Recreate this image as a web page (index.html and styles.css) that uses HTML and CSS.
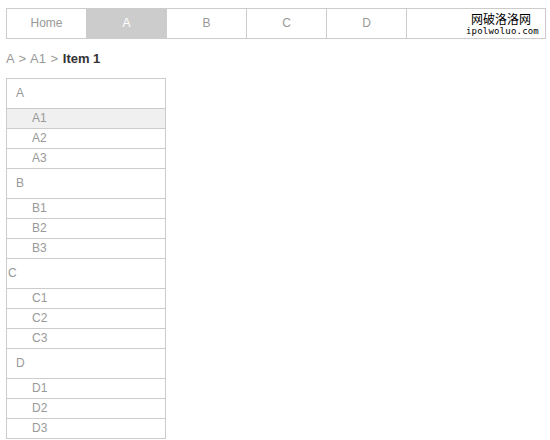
FILE: index.html
```html
<!DOCTYPE html>
<html>
<head>
<meta charset="utf-8">
<link rel="stylesheet" href="styles.css">
</head>
<body>
<ul class="nav">
  <li class="nav-item">Home</li>
  <li class="nav-item active">A</li>
  <li class="nav-item">B</li>
  <li class="nav-item">C</li>
  <li class="nav-item">D</li>
  <li class="nav-logo">
    <span class="logo-cn">网破洛洛网</span>
    <span class="logo-en">ipolwoluo.com</span>
  </li>
</ul>
<div class="crumbs">A &gt; A1 &gt; <b>Item 1</b></div>
<ul class="side">
  <li class="head">A</li>
  <li class="sub current">A1</li>
  <li class="sub">A2</li>
  <li class="sub">A3</li>
  <li class="head">B</li>
  <li class="sub">B1</li>
  <li class="sub">B2</li>
  <li class="sub">B3</li>
  <li class="head flush">C</li>
  <li class="sub">C1</li>
  <li class="sub">C2</li>
  <li class="sub">C3</li>
  <li class="head">D</li>
  <li class="sub">D1</li>
  <li class="sub">D2</li>
  <li class="sub">D3</li>
</ul>
</body>
</html>
```
FILE: styles.css
```css
* { box-sizing: border-box; }
body {
  margin: 0;
  padding: 8px 6px 0;
  font-family: "Liberation Sans", Arial, sans-serif;
  font-size: 12px;
  color: #999;
  background: #fff;
}
ul { list-style: none; margin: 0; padding: 0; }
.nav {
  display: flex;
  width: 540px;
  height: 31px;
  border: 1px solid #ccc;
}
.nav-item {
  width: 80px;
  border-right: 1px solid #ccc;
  text-align: center;
  line-height: 29px;
  color: #999;
}
.nav-item.active {
  background: #ccc;
  color: #fff;
}
.nav-logo {
  flex: 1;
  display: flex;
  flex-direction: column;
  align-items: flex-end;
  padding: 1px 6px 0 0;
  color: #000;
}
.logo-cn {
  font-family: "Noto Sans CJK SC", sans-serif;
  font-size: 12px;
  line-height: 17px;
  margin-right: 8px;
}
.logo-en {
  font-family: "DejaVu Sans Mono", monospace;
  font-size: 9px;
  line-height: 9px;
  letter-spacing: 0.2px;
}
.crumbs {
  margin-top: 12px;
  height: 16px;
  line-height: 16px;
  font-size: 13px;
  color: #999;
  word-spacing: 1px;
}
.crumbs b { color: #333; word-spacing: 0; }
.side {
  margin-top: 11px;
  width: 160px;
  border: 1px solid #ccc;
  border-bottom: 0;
}
.side li {
  border-bottom: 1px solid #ccc;
}
.head {
  height: 30px;
  line-height: 29px;
  padding-left: 9px;
}
.head.flush { padding-left: 1px; }
.sub {
  height: 20px;
  line-height: 19px;
  padding-left: 25px;
}
.sub.current { background: #f0f0f0; }
```
